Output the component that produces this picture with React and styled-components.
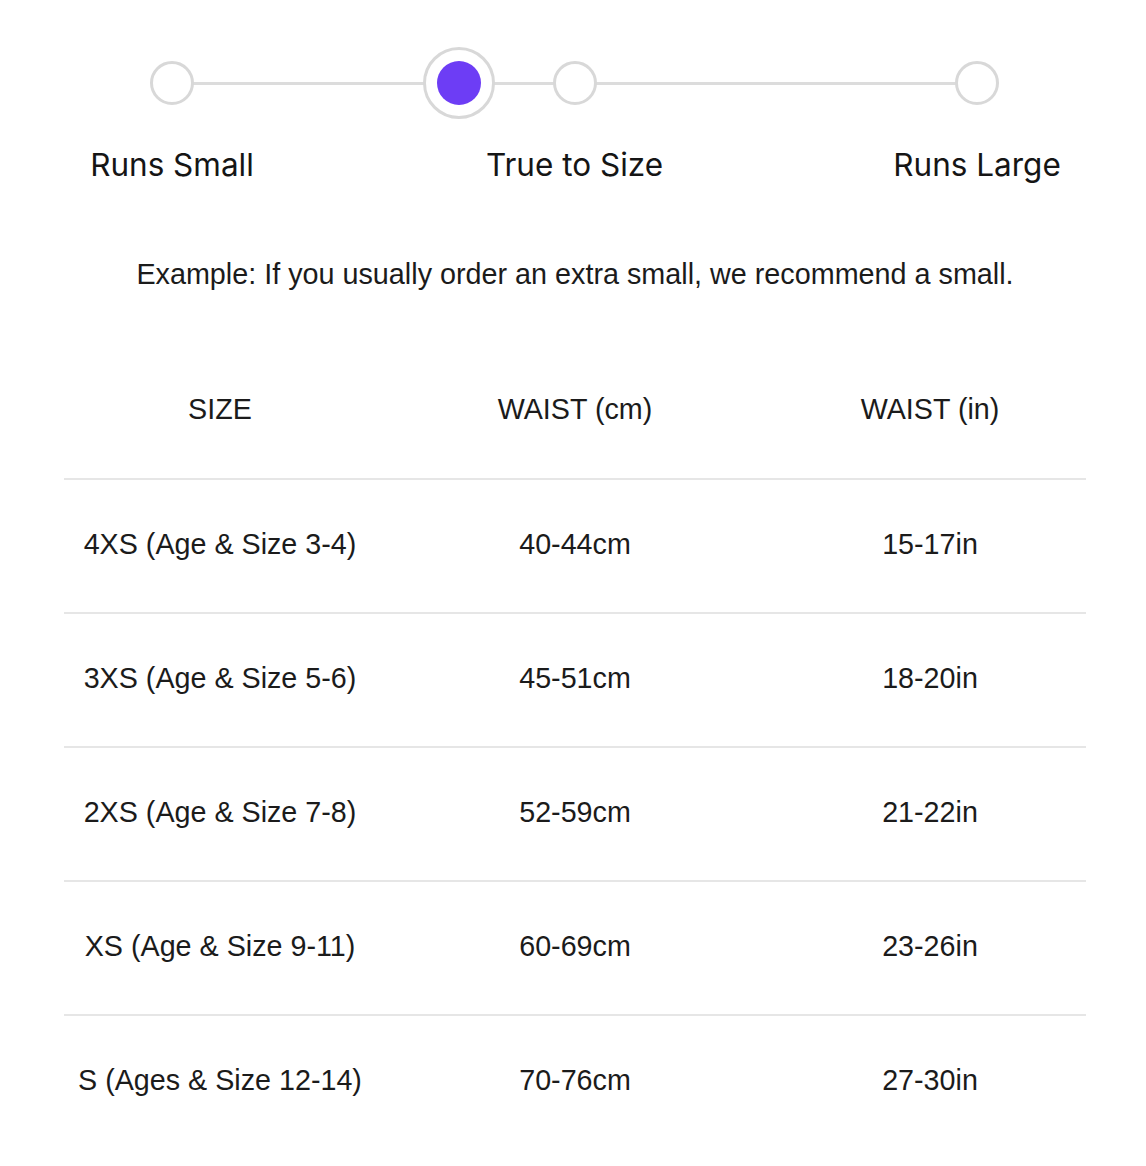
import React from "react";
import styled, { createGlobalStyle } from "styled-components";

const Global = createGlobalStyle`
  html, body { margin: 0; padding: 0; background: #ffffff; }
  body { font-family: "Liberation Sans", Arial, sans-serif; color: #1b1b1b; }
`;

const Page = styled.div`
  width: 1022px;
  padding: 47px 0 0 64px;
  box-sizing: content-box;
`;

const Stepper = styled.div`
  width: 1005px;
  margin-left: 8px;
  display: flex;
  flex-direction: column;
`;

const Track = styled.div`
  position: relative;
  height: 72px;
  margin: 0 78px;
  display: flex;
  align-items: center;
  justify-content: space-between;
  &::before {
    content: "";
    position: absolute;
    left: 22px;
    right: 22px;
    top: 50%;
    height: 3px;
    margin-top: -1.5px;
    background: #dcdcdc;
  }
`;

const Marker = styled.div`
  position: relative;
  width: 44px;
  height: 44px;
  box-sizing: border-box;
  border-radius: 50%;
  border: 3px solid #d8d8d8;
  background: #ffffff;
`;

const Thumb = styled.div`
  position: absolute;
  top: 0;
  width: 72px;
  height: 72px;
  margin-left: -36px;
  box-sizing: border-box;
  border-radius: 50%;
  border: 3px solid #d8d8d8;
  background: #ffffff;
  display: flex;
  align-items: center;
  justify-content: center;
  &::after {
    content: "";
    width: 44px;
    height: 44px;
    border-radius: 50%;
    background: #6d3df5;
  }
`;

const Labels = styled.div`
  display: flex;
  justify-content: space-between;
  margin-top: 28px;
`;

const Label = styled.div`
  width: 200px;
  text-align: center;
  font-family: Inter, "Liberation Sans", sans-serif;
  font-size: 31.5px;
  line-height: 36px;
  color: #151515;
  white-space: nowrap;
`;

const Example = styled.p`
  margin: 75px 0 0;
  text-align: center;
  font-size: 28.75px;
  line-height: 32px;
  color: #1b1b1b;
`;

const Table = styled.div`
  margin-top: 49px;
  display: grid;
  grid-template-columns: 312px 398px 312px;
`;

const Cell = styled.div`
  display: flex;
  align-items: center;
  justify-content: center;
  text-align: center;
  font-size: 28.7px;
  line-height: 34px;
  color: #1b1b1b;
  white-space: nowrap;
  height: ${(p) => (p.$head ? "139px" : "134px")};
  box-sizing: border-box;
  padding-bottom: ${(p) => (p.$head ? "0" : "5px")};
  border-top: ${(p) => (p.$head ? "none" : "2px solid #e6e6e6")};
`;

const rows = [
  ["4XS (Age & Size 3-4)", "40-44cm", "15-17in"],
  ["3XS (Age & Size 5-6)", "45-51cm", "18-20in"],
  ["2XS (Age & Size 7-8)", "52-59cm", "21-22in"],
  ["XS (Age & Size 9-11)", "60-69cm", "23-26in"],
  ["S (Ages & Size 12-14)", "70-76cm", "27-30in"],
];

export default function App() {
  const value = 0.3565;
  return (
    <Page>
      <Global />
      <Stepper>
        <Track>
          <Marker />
          <Marker />
          <Marker />
          <Thumb style={{ left: `${22 + value * 805}px` }} />
        </Track>
        <Labels>
          <Label>Runs Small</Label>
          <Label>True to Size</Label>
          <Label>Runs Large</Label>
        </Labels>
      </Stepper>
      <Example>Example: If you usually order an extra small, we recommend a small.</Example>
      <Table>
        <Cell $head>SIZE</Cell>
        <Cell $head>WAIST (cm)</Cell>
        <Cell $head>WAIST (in)</Cell>
        {rows.map((r, i) =>
          r.map((c, j) => <Cell key={`${i}-${j}`}>{c}</Cell>)
        )}
      </Table>
    </Page>
  );
}
